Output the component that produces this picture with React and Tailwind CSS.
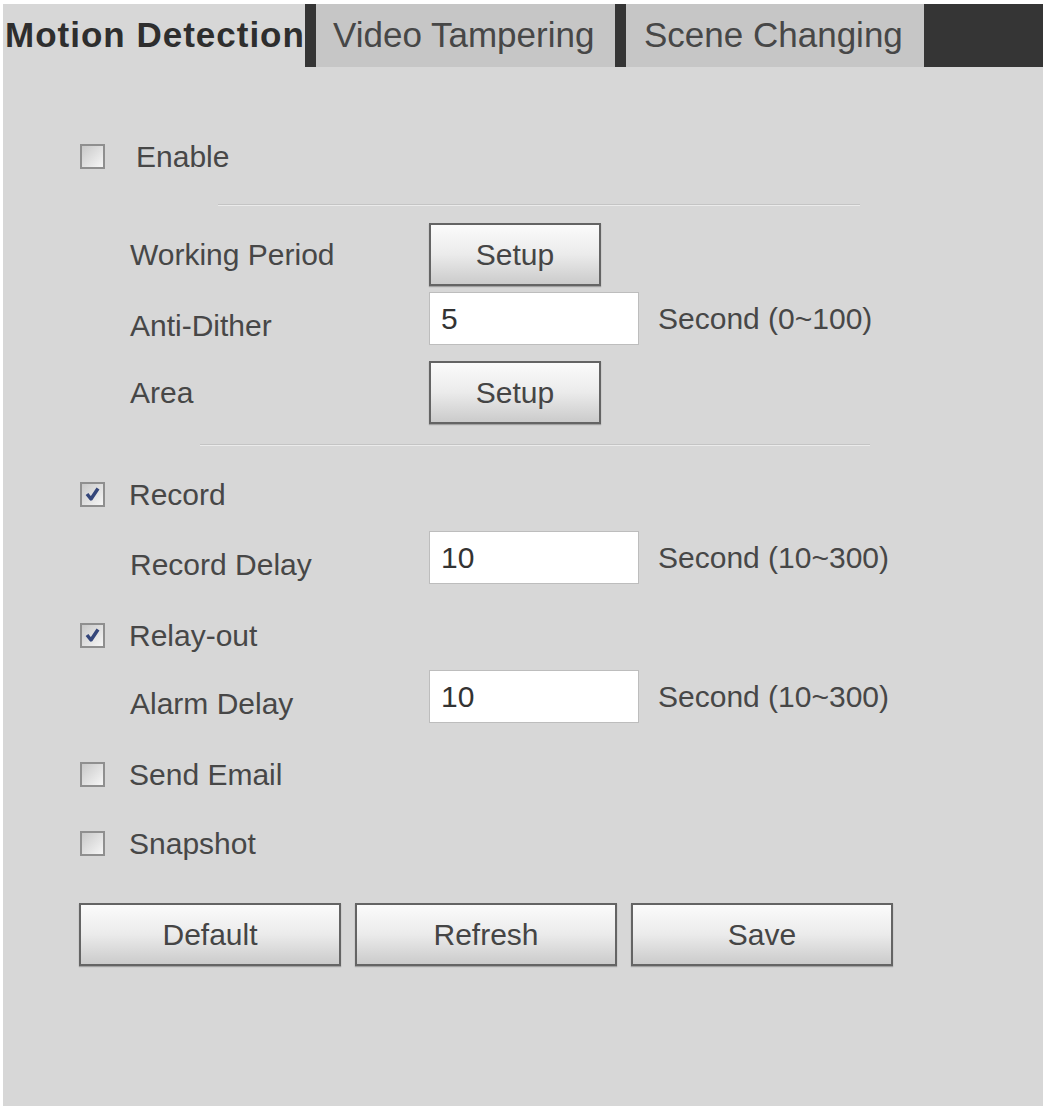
import React from 'react';

const font = { fontFamily: '"Liberation Sans", Arial, sans-serif' };

// Old-style checkbox with a grey frame and a blue tick
const CheckBox = ({ checked }) => (
    <div className="w-[25px] h-[25px] border-2 border-[#8f8f8f] bg-gradient-to-br from-[#c9c9c9] to-[#f6f6f6] flex items-center justify-center shrink-0">
        {checked && (
            <svg width="17" height="17" viewBox="0 0 17 17">
                <path d="M3 8 L7 13 L14 2.5" fill="none" stroke="#34467a" strokeWidth="3.5" strokeLinejoin="round" />
            </svg>
        )}
    </div>
);

const Button = ({ children, className }) => (
    <div
        className={`flex items-center justify-center border-2 border-[#646464] bg-gradient-to-b from-[#fbfbfb] via-[#ebebeb] to-[#cbcbcb] text-[30px] text-[#454545] shadow-[0_1px_1px_rgba(0,0,0,0.25)] ${className}`}
    >
        {children}
    </div>
);

const TextBox = ({ value }) => (
    <div className="w-[210px] h-[53px] bg-white border border-[#bdbdbd] flex items-center pl-[11px] text-[30px] text-[#333]">
        {value}
    </div>
);

const Divider = ({ className }) => (
    <div className={`h-[2px] border-t border-[#c4c4c4] border-b border-b-[#ebebeb] ${className}`} />
);

const CheckRow = ({ checked, label, className, labelClass = 'ml-[24px]' }) => (
    <div className={`flex items-center h-[40px] ${className}`}>
        <CheckBox checked={checked} />
        <span className={`text-[30px] text-[#474747] ${labelClass}`}>{label}</span>
    </div>
);

const FieldRow = ({ label, children, suffix, className, height = 'h-[53px]', labelOffset = 'mt-[14px]' }) => (
    <div className={`flex items-center ${height} pl-[50px] ${className}`}>
        <span className={`w-[299px] text-[30px] text-[#474747] ${labelOffset}`}>{label}</span>
        {children}
        {suffix && <span className="ml-[19px] text-[30px] text-[#474747]">{suffix}</span>}
    </div>
);

export default function App() {
    return (
        <div className="w-[1048px] h-[1106px] bg-white pl-[3px] pr-[5px] pt-[4px]" style={font}>
            <div className="h-full bg-[#d7d7d7] flex flex-col">
                {/* Tabs */}
                <div className="flex h-[63px] bg-[#353535] gap-[11px]">
                    <div className="w-[302px] bg-[#d7d7d7] flex items-center pl-[2px] text-[35px] font-bold tracking-[1px] text-[#2e2e2e] whitespace-nowrap">
                        Motion Detection
                    </div>
                    <div className="w-[299px] bg-[#c6c6c6] flex items-center pl-[17px] text-[35px] text-[#474747] whitespace-nowrap">
                        Video Tampering
                    </div>
                    <div className="w-[298px] bg-[#c6c6c6] flex items-center pl-[18px] text-[35px] text-[#474747] whitespace-nowrap">
                        Scene Changing
                    </div>
                </div>

                <div className="pl-[77px] flex flex-col">
                    <CheckRow label="Enable" labelClass="ml-[31px]" className="mt-[69px]" />
                    <Divider className="mt-[28px] ml-[138px] w-[642px]" />

                    <FieldRow label="Working Period" height="h-[63px]" labelOffset="mt-0" className="mt-[17px]">
                        <Button className="w-[172px] h-[63px]">Setup</Button>
                    </FieldRow>
                    <FieldRow label="Anti-Dither" suffix="Second (0~100)" className="mt-[6px]">
                        <TextBox value="5" />
                    </FieldRow>
                    <FieldRow label="Area" height="h-[63px]" labelOffset="mt-0" className="mt-[16px]">
                        <Button className="w-[172px] h-[63px]">Setup</Button>
                    </FieldRow>
                    <Divider className="mt-[20px] ml-[120px] w-[670px]" />

                    <CheckRow checked label="Record" className="mt-[28px]" />
                    <FieldRow label="Record Delay" suffix="Second (10~300)" className="mt-[17px]">
                        <TextBox value="10" />
                    </FieldRow>

                    <CheckRow checked label="Relay-out" className="mt-[31px]" />
                    <FieldRow label="Alarm Delay" suffix="Second (10~300)" className="mt-[15px]">
                        <TextBox value="10" />
                    </FieldRow>

                    <CheckRow label="Send Email" className="mt-[31px]" />
                    <CheckRow label="Snapshot" className="mt-[29px]" />

                    <div className="flex gap-[14px] mt-[40px] -ml-[1px]">
                        <Button className="w-[262px] h-[63px]">Default</Button>
                        <Button className="w-[262px] h-[63px]">Refresh</Button>
                        <Button className="w-[262px] h-[63px]">Save</Button>
                    </div>
                </div>
            </div>
        </div>
    );
}
